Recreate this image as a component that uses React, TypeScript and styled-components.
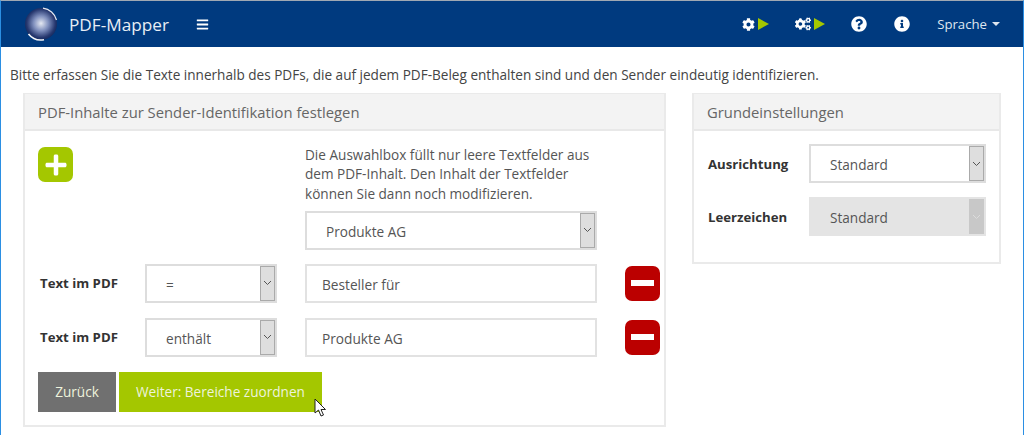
import React from 'react'
import styled, { createGlobalStyle } from 'styled-components'
import { FaBars, FaCog, FaCogs, FaInfoCircle, FaPlus, FaQuestionCircle } from 'react-icons/fa'

const GlobalStyle = createGlobalStyle`
  html, body {
    margin: 0;
    padding: 0;
    background: #fff;
  }
  * {
    box-sizing: border-box;
  }
`

const SFrame = styled.div`
  position: relative;
  width: 1024px;
  height: 435px;
  overflow: hidden;
  background: #fff;
  border-top: 1px solid #9fa8b3;
  border-left: 1px solid #2b8fe3;
  border-right: 1px solid #2b8fe3;
  font-family: "Open Sans", sans-serif;
  color: #555;
`

const SNavbar = styled.div`
  display: flex;
  align-items: center;
  height: 46px;
  padding: 0 23px 0 23px;
  background: #003a7f;
  color: #fff;
`

const SBrand = styled.div`
  font-size: 17.2px;
  margin-left: 11px;
  color: #e8eef5;
`

const SMenuToggle = styled.div`
  display: flex;
  font-size: 13px;
  margin-left: 27px;
`

const SNavRight = styled.div`
  display: flex;
  align-items: center;
  margin-left: auto;
`

const SNavIcon = styled.div<{ $gap: number }>`
  display: flex;
  align-items: center;
  margin-left: ${({ $gap }) => $gap}px;
  font-size: 16px;
`

const SPlay = styled.span`
  width: 0;
  height: 0;
  margin-left: 3px;
  border-left: 11px solid #a4c700;
  border-top: 6px solid transparent;
  border-bottom: 6px solid transparent;
`

const SLang = styled.div`
  display: flex;
  align-items: center;
  margin-left: 27px;
  font-size: 13.2px;
  color: #dfe6ef;
`

const SCaret = styled.span`
  width: 0;
  height: 0;
  margin-left: 5px;
  border-top: 4px solid #dfe6ef;
  border-left: 4px solid transparent;
  border-right: 4px solid transparent;
`

const SIntro = styled.p`
  margin: 0;
  padding: 19px 0 0 9px;
  height: 46px;
  font-size: 13.59px;
  line-height: 18px;
  color: #444;
`

const SColumns = styled.div`
  display: flex;
  align-items: flex-start;
  gap: 26px;
  padding-left: 22px;
`

const SPanel = styled.div<{ $width: number; $height: number }>`
  width: ${({ $width }) => $width}px;
  height: ${({ $height }) => $height}px;
  border: 2px solid #eaeaea;
  border-top-width: 1px;
`

const SPanelHeader = styled.div`
  height: 37px;
  padding: 0 13px;
  display: flex;
  align-items: center;
  background: #f3f3f3;
  border-bottom: 2px solid #e8e8e8;
  font-size: 14.8px;
  color: #666;
`

const SPanelBody = styled.div`
  padding: 16px 0 0 13px;
`

const STopRow = styled.div`
  display: flex;
  align-items: flex-start;
`

const SHelpColumn = styled.div`
  width: 292px;
  margin: -2px 0 -1px 232px;
`

const SHelp = styled.p`
  margin: 0 0 8px;
  font-size: 13.6px;
  line-height: 19.3px;
  color: #555;
`

const SRow = styled.div`
  display: grid;
  grid-template-columns: 79px 132px 292px 35px;
  column-gap: 28px;
  align-items: center;
  height: 39px;
  margin-top: 15px;
  width: 620px;
`

const SLabel = styled.div`
  font-size: 13.2px;
  font-weight: 700;
  color: #333;
  padding-left: 2px;
  white-space: nowrap;
`

const SSelect = styled.div<{ $disabled?: boolean }>`
  display: flex;
  justify-content: space-between;
  height: 39px;
  border: 2px solid #ddd;
  background: ${({ $disabled }) => ($disabled ? '#e4e4e4' : '#fff')};
  border-color: ${({ $disabled }) => ($disabled ? '#e4e4e4' : '#ddd')};
`

const SSelectText = styled.div`
  display: flex;
  align-items: center;
  padding: 2px 0 0 19px;
  font-size: 13.6px;
  color: #555;
`

const SSelectArrow = styled.div<{ $disabled?: boolean }>`
  display: flex;
  align-items: center;
  justify-content: center;
  width: 15px;
  background: ${({ $disabled }) => ($disabled ? '#c8c8c8' : '#dedede')};
  border: 1px solid ${({ $disabled }) => ($disabled ? '#c8c8c8' : '#aaa')};
  color: ${({ $disabled }) => ($disabled ? '#dcdcdc' : '#555')};
`

const SField = styled.div`
  display: flex;
  align-items: center;
  height: 39px;
  padding: 2px 15px 0;
  border: 2px solid #e2e2e2;
  font-size: 13.7px;
  color: #555;
`

const SSquareButton = styled.div<{ $color: string }>`
  display: flex;
  align-items: center;
  justify-content: center;
  width: 35px;
  height: 35px;
  border-radius: 7px;
  background: ${({ $color }) => $color};
  color: #fff;
`

const SMinusBar = styled.span`
  width: 23px;
  height: 6px;
  background: #fff;
`

const SButtons = styled.div`
  display: flex;
  gap: 3px;
  margin-top: 15px;
`

const SButton = styled.div<{ $color: string; $width: number }>`
  display: flex;
  align-items: center;
  justify-content: center;
  width: ${({ $width }) => $width}px;
  height: 40px;
  background: ${({ $color }) => $color};
  font-size: 13.6px;
  color: #eef3dc;
`

const SForm = styled.div`
  display: grid;
  grid-template-columns: 103px 177px;
  row-gap: 14px;
  align-items: center;
  padding: 13px 0 0 12px;
`

const SCursor = styled.svg`
  position: absolute;
  left: 313px;
  top: 397px;
`

const Chevron = () => (
  <svg width="9" height="6" viewBox="0 0 9 6">
    <path d="M1 1 L4.5 4.5 L8 1" fill="none" stroke="currentColor" strokeWidth="1" />
  </svg>
)

const Select = ({ value, disabled }: { value: string; disabled?: boolean }) => (
  <SSelect $disabled={disabled}>
    <SSelectText>{value}</SSelectText>
    <SSelectArrow $disabled={disabled}>
      <Chevron />
    </SSelectArrow>
  </SSelect>
)

const Logo = () => (
  <svg width="34" height="34" viewBox="0 0 34 34">
    <defs>
      <radialGradient id="sphere" cx="50%" cy="48%" r="52%">
        <stop offset="0%" stopColor="#e4e8f2" />
        <stop offset="45%" stopColor="#7f8fbd" />
        <stop offset="85%" stopColor="#27386f" />
        <stop offset="100%" stopColor="#142a5f" />
      </radialGradient>
    </defs>
    <circle cx="17" cy="17" r="16" fill="url(#sphere)" />
    <path d="M19 1.2 A16 16 0 0 1 32.5 13" fill="none" stroke="#e6eaf2" strokeWidth="1.2" />
    <path d="M4.5 27 A16 16 0 0 0 20 32.7" fill="none" stroke="#f2f4f8" strokeWidth="1.6" />
  </svg>
)

const rows = [
  { op: '=', text: 'Besteller für' },
  { op: 'enthält', text: 'Produkte AG' },
]

const App = () => {
  return (
    <SFrame>
      <GlobalStyle />
      <SNavbar>
        <Logo />
        <SBrand>PDF-Mapper</SBrand>
        <SMenuToggle>
          <FaBars />
        </SMenuToggle>
        <SNavRight>
          <SNavIcon $gap={0}>
            <FaCog size={13} />
            <SPlay />
          </SNavIcon>
          <SNavIcon $gap={26}>
            <FaCogs size={16} />
            <SPlay />
          </SNavIcon>
          <SNavIcon $gap={26}>
            <FaQuestionCircle />
          </SNavIcon>
          <SNavIcon $gap={27}>
            <FaInfoCircle />
          </SNavIcon>
          <SLang>
            Sprache
            <SCaret />
          </SLang>
        </SNavRight>
      </SNavbar>

      <SIntro>
        Bitte erfassen Sie die Texte innerhalb des PDFs, die auf jedem PDF-Beleg enthalten sind und den Sender eindeutig identifizieren.
      </SIntro>

      <SColumns>
        <SPanel $width={643} $height={334}>
          <SPanelHeader>PDF-Inhalte zur Sender-Identifikation festlegen</SPanelHeader>
          <SPanelBody>
            <STopRow>
              <SSquareButton $color="#a4c700">
                <FaPlus size={24} />
              </SSquareButton>
              <SHelpColumn>
                <SHelp>
                  Die Auswahlbox füllt nur leere Textfelder aus dem PDF-Inhalt. Den Inhalt der Textfelder können Sie dann noch modifizieren.
                </SHelp>
                <Select value="Produkte AG" />
              </SHelpColumn>
            </STopRow>
            {rows.map((row, index) => (
              <SRow key={index}>
                <SLabel>Text im PDF</SLabel>
                <Select value={row.op} />
                <SField>{row.text}</SField>
                <SSquareButton $color="#bb0000">
                  <SMinusBar />
                </SSquareButton>
              </SRow>
            ))}
            <SButtons>
              <SButton $color="#707070" $width={78}>Zurück</SButton>
              <SButton $color="#a4c700" $width={203}>Weiter: Bereiche zuordnen</SButton>
            </SButtons>
          </SPanelBody>
        </SPanel>

        <SPanel $width={309} $height={171}>
          <SPanelHeader>Grundeinstellungen</SPanelHeader>
          <SForm>
            <SLabel>Ausrichtung</SLabel>
            <Select value="Standard" />
            <SLabel>Leerzeichen</SLabel>
            <Select value="Standard" disabled />
          </SForm>
        </SPanel>
      </SColumns>

      <SCursor width="14" height="20" viewBox="0 0 14 20">
        <path d="M1 1 L1 15 L4.5 12 L7 18 L9.5 17 L7 11.5 L11.5 11.5 Z" fill="#fff" stroke="#222" strokeWidth="1" />
      </SCursor>
    </SFrame>
  )
}

export default App
